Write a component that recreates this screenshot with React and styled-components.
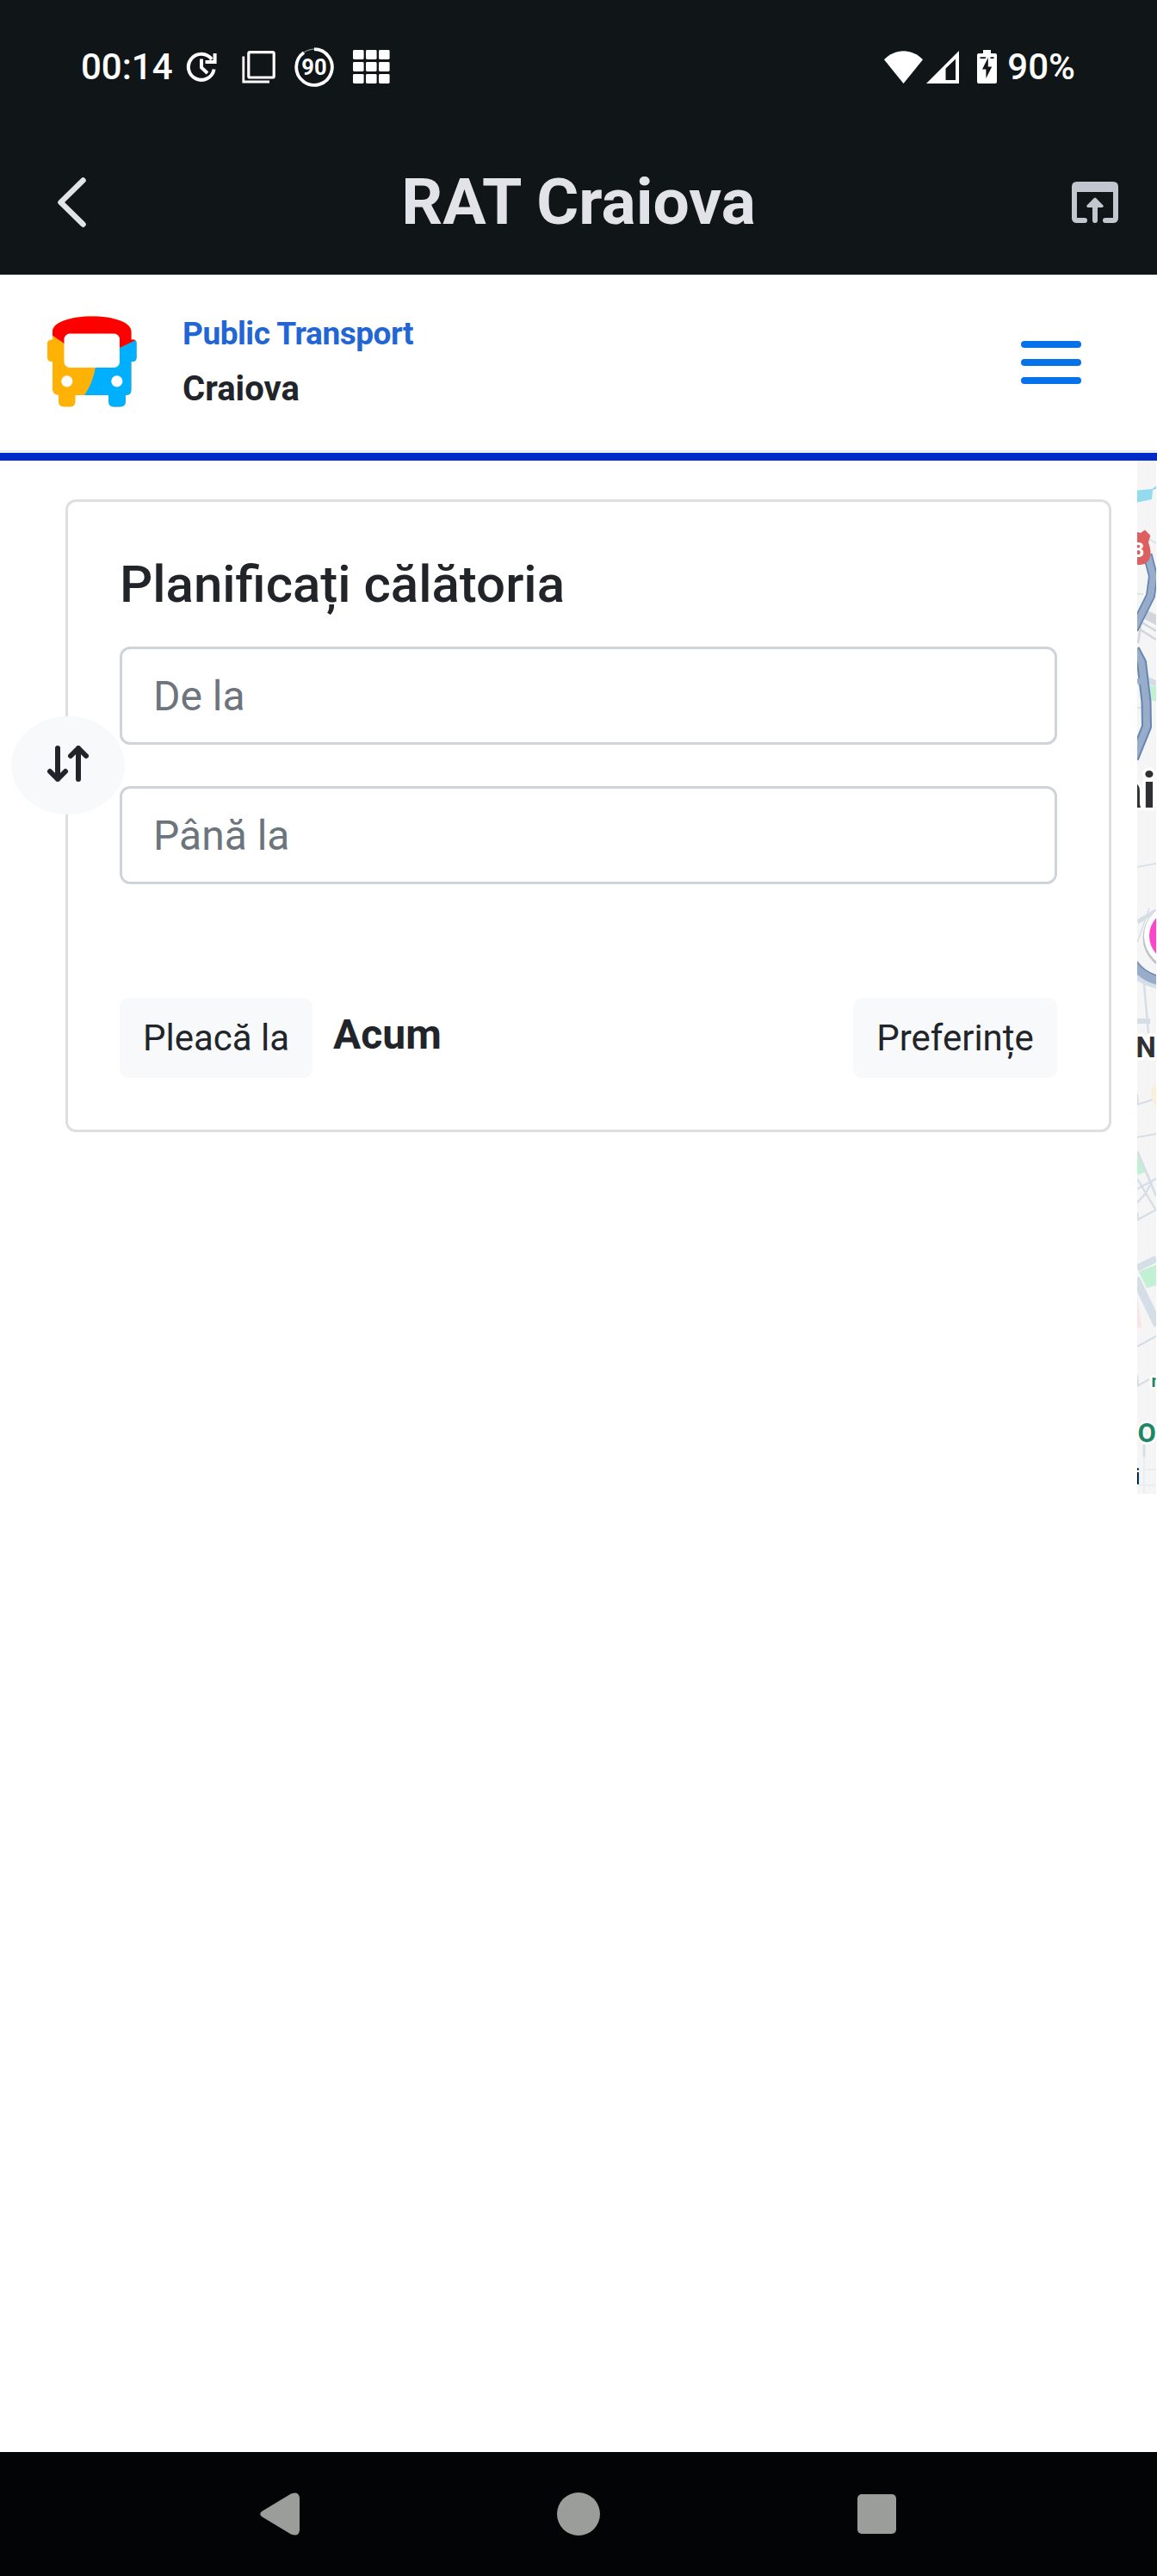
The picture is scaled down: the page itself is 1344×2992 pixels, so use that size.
import React from 'react';
import styled, { createGlobalStyle } from 'styled-components';

const GlobalStyle = createGlobalStyle`
  *, *::before, *::after { box-sizing: border-box; }
  body {
    margin: 0;
    background: #fff;
    font-family: Roboto, "Noto Sans", sans-serif;
    color: #212529;
  }
  svg { display: block; flex: none; }
`;

const Screen = styled.div`
  width: 1344px;
  height: 2992px;
  display: flex;
  flex-direction: column;
  background: #fff;
  overflow: hidden;
`;

const StatusBar = styled.div`
  height: 155px;
  padding: 0 95px 0 94px;
  display: flex;
  justify-content: space-between;
  background: #101518;
  color: #fff;
`;

const StatusGroup = styled.div`
  height: 155px;
  display: flex;
  align-items: center;
  gap: ${(p) => p.$gap}px;
`;

const StatusText = styled.span`
  font-size: 42px;
  font-weight: 500;
  line-height: 155px;
`;

const TitleBar = styled.header`
  height: 164px;
  padding: 0 36px 4px;
  display: flex;
  align-items: center;
  justify-content: space-between;
  background: #101518;
  color: #e1e3e8;
`;

const AppTitle = styled.h1`
  margin: 0;
  padding-bottom: 3px;
  font-size: 75px;
  font-weight: 700;
  line-height: 150px;
`;

const BarButton = styled.button`
  width: 72px;
  height: 72px;
  padding: 0 0 0 ${(p) => p.$inset || 0}px;
  border: 0;
  background: none;
  display: flex;
  align-items: center;
`;

const SiteHeader = styled.div`
  height: 216px;
  padding: 0 88px 5px 54px;
  display: flex;
  align-items: center;
  justify-content: space-between;
  border-bottom: 9px solid #002bcc;
  box-shadow: inset 0 -3px 0 #eef1f3;
`;

const Brand = styled.div`
  display: flex;
  align-items: center;
  gap: 52px;
`;

const BrandText = styled.div`
  display: flex;
  flex-direction: column;
`;

const BrandLine = styled.span`
  font-size: ${(p) => p.$size}px;
  font-weight: 700;
  line-height: 64px;
  letter-spacing: ${(p) => p.$tracking || 0}px;
  color: ${(p) => p.$color};
`;

const MenuButton = styled.button`
  width: 70px;
  margin-top: 2px;
  padding: 0;
  border: 0;
  background: none;
  display: flex;
  flex-direction: column;
  gap: 13.5px;
`;

const MenuLine = styled.span`
  height: 7.5px;
  border-radius: 4px;
  background: #0672ea;
`;

const Content = styled.main`
  flex: 1;
  display: flex;
  align-items: flex-start;
`;

const PlannerPane = styled.section`
  width: 1321px;
  padding: 45px 30px 0 76px;
`;

const Card = styled.div`
  position: relative;
  height: 735px;
  padding: 60px 60px 0;
  border: 3px solid #dfdfdf;
  border-radius: 12px;
  display: flex;
  flex-direction: column;
`;

const CardTitle = styled.h2`
  margin: 0 0 36px;
  font-size: 60px;
  font-weight: 500;
  line-height: 72px;
`;

const Field = styled.input`
  width: 100%;
  height: 114px;
  margin: 0 0 48px;
  padding: 0 36px;
  border: 3px solid #ced4da;
  border-radius: 12px;
  background: #fff;
  font-family: inherit;
  font-size: 48px;
  color: #212529;
  &::placeholder { color: #6c757d; opacity: 1; }
`;

const SwapButton = styled.button`
  position: absolute;
  left: -66px;
  top: 249px;
  width: 132px;
  height: 114px;
  padding: 0 0 4px;
  border: 0;
  border-radius: 50%;
  background: #f8f9fb;
  display: flex;
  align-items: center;
  justify-content: center;
`;

const OptionsRow = styled.div`
  margin-top: 84px;
  display: flex;
  align-items: flex-start;
`;

const LightButton = styled.button`
  width: ${(p) => p.$width}px;
  height: 93px;
  padding: 0;
  border: 0;
  border-radius: 10px;
  background: #f8f9fb;
  font-family: inherit;
  font-size: 42px;
  line-height: 93px;
  color: #212529;
`;

const DepartValue = styled.strong`
  flex: 1;
  margin-left: 24px;
  font-size: 48px;
  font-weight: 700;
  line-height: 86px;
`;

const NavBar = styled.nav`
  height: 144px;
  padding: 0 303px 0 302px;
  display: flex;
  align-items: center;
  justify-content: space-between;
  background: #020405;
  color: #9b9d9b;
`;

const HistoryIcon = () => (
  <svg width="36" height="36" viewBox="0 0 36 36" fill="none" stroke="#fff" strokeWidth="4">
    <path d="M30 9A15 15 0 1 0 32.6 20.5" />
    <path d="M33.6 2V12H22.5" />
    <path d="M18 8.5V18.5L25 25" />
  </svg>
);

const LayersIcon = () => (
  <svg width="39" height="38" viewBox="0 0 39 38" fill="none" stroke="#fff">
    <rect x="7.8" y="1.6" width="29.4" height="29.4" rx="1.6" strokeWidth="3.2" />
    <path d="M1.8 6.5V36H32" strokeWidth="2.8" />
  </svg>
);

const BadgeIcon = () => (
  <svg width="46" height="46" viewBox="0 0 46 46" fill="none">
    <path d="M23 2.2A20.8 20.8 0 1 1 11 6" stroke="#fff" strokeWidth="3.8" />
    <path d="M11 6A20.8 20.8 0 0 1 23 2.2" stroke="#8b8e90" strokeWidth="1.2" />
    <text x="23" y="32.300" textAnchor="middle" fontFamily="Roboto, sans-serif" fontSize="25.500" fontWeight="700" fill="#fff">90</text>
  </svg>
);

const GridIcon = () => (
  <svg width="43" height="39" viewBox="0 0 43 39" fill="#fff">
    {[0, 14, 28].map((y) =>
      [0, 15, 30].map((x) => <rect key={`${x}-${y}`} x={x} y={y} width="12.6" height="11" rx="1.4" />)
    )}
  </svg>
);

const WifiIcon = () => (
  <svg width="45" height="38" viewBox="0 0 45 38" fill="#fff">
    <path d="M0 10.2C6 4 14 0.3 22.5 0.3S39 4 45 10.2L22.5 38Z" />
  </svg>
);

const SignalIcon = () => (
  <svg width="38" height="38" viewBox="0 0 38 38" fill="#fff" fillRule="evenodd">
    <path d="M38 0V38H0ZM34 9.5 22.5 20.5V34H34Z" />
  </svg>
);

const BatteryIcon = () => (
  <svg width="23" height="39" viewBox="0 0 23 39">
    <path d="M7 0H16V4H21Q23 4 23 6V37Q23 39 21 39H2Q0 39 0 37V6Q0 4 2 4H7Z" fill="#fff" />
    <path d="M3.5 8.2H10.5L9.5 10H3.5ZM15.5 8.2H19.5V10H15.5Z" fill="#101518" />
    <path d="M12.8 9 6 22.5H10.4V33L17.2 19.5H12.8Z" fill="#101518" />
  </svg>
);

const BackIcon = () => (
  <svg width="36" height="60" viewBox="0 0 36 60" fill="none" stroke="#e1e3e8" strokeWidth="6.500" strokeLinecap="round" strokeLinejoin="round">
    <path d="M30.500 4.500 4.500 30 30.500 55.500" />
  </svg>
);

const OpenIcon = () => (
  <svg width="72" height="72" viewBox="0 0 24 24" fill="#c1c6cf">
    <path d="M5 4H19Q21 4 21 6V18Q21 20 19 20H16A1 1 0 0 1 16 18H19V8H5V18H8A1 1 0 0 1 8 20H5Q3 20 3 18V6Q3 4 5 4Z" />
    <path d="M11.65 10.35Q12 10 12.35 10.35L15.15 13.15Q15.5 13.8 14.8 14H13V19A1 1 0 0 1 11 19V14H9.2Q8.5 13.8 8.85 13.15Z" />
  </svg>
);

const BusLogo = () => (
  <svg width="106" height="108" viewBox="54 366 106 108">
    <defs>
      <clipPath id="bus">
        <path d="M61 385C61 375 80 367.5 107 367.5S152.500 375 152.500 385V394.500H155Q158.700 394.500 158.700 399V415Q158.700 420 154 420H152.500V453Q152.500 459 146 459V466Q146 472.500 139.500 472.500H132Q126 472.500 126 466V459H87.500V466Q87.500 472.500 81.500 472.500H74.500Q68 472.500 68 466V459Q61 458 61 452V420H60Q55 420 55 415V399Q55 394.500 60 394.500H61Z" />
      </clipPath>
    </defs>
    <g clipPath="url(#bus)">
      <rect x="54" y="366" width="106" height="108" fill="#ffb206" />
      <path d="M139 404 162 392V474H98V459Q108 445 111 426L120 404Z" fill="#00b0ff" />
      <path d="M54 366H160V394L139 404H82L60 389 54 385Z" fill="#ff0000" />
    </g>
    <rect x="74.500" y="387.500" width="64.500" height="39.500" rx="6.500" fill="#fff" />
    <circle cx="77.800" cy="442.800" r="6.600" fill="#fff" />
    <circle cx="135.800" cy="442.800" r="6.600" fill="#fff" />
  </svg>
);

const SwapIcon = () => (
  <svg width="48" height="42" viewBox="0 0 48 42" fill="none" stroke="#212529" strokeWidth="6" strokeLinecap="round" strokeLinejoin="round">
    <path d="M12 3V39M3 30 12 39 21 30" />
    <path d="M36 39V3M27 12 36 3 45 12" />
  </svg>
);

const MapStrip = () => (
  <svg width="22" height="1200" viewBox="0 0 22 1200" fontFamily="Roboto, sans-serif">
    <rect width="22" height="1200" fill="#f5f5f5" />
    <path d="M0 34.400 17 33 22 29.500V33L18 34 17 45 0 48.500Z" fill="#93dbee" />
    <g fill="none" stroke="#d5dee7" strokeWidth="1.500">
      <path d="M12 90 22 96M0 155H7M0 287H6" />
      <path d="M0 472 22 468" />
      <path d="M0 536 22 523" strokeWidth="5" />
      <path d="M0 560 14 520" />
      <path d="M8 608 13 665" strokeWidth="2.500" />
      <path d="M0 651H15" strokeWidth="6" />
      <path d="M0 748 22 741M0 786 22 782M0 735 1 748" strokeWidth="2" />
    </g>
    <path d="M8 172 22 179V191L8 184Z" fill="#d2d6db" />
    <path d="M2 186 22 198M0 194 22 208M5 185 1 212" fill="none" stroke="#d2d6db" strokeWidth="2.500" />
    <path d="M14 261 22 262V280L16 278Z" fill="#c2f0d4" />
    <path d="M8 253 22 259" stroke="#d3dde6" strokeWidth="7" />
    <g fill="none" strokeLinejoin="round">
      <path d="M12 109 18.500 134 15.500 157-4 196" stroke="#6785b2" strokeWidth="11" />
      <path d="M-3 219 5 234 10.500 280 11 309-4 346" stroke="#6785b2" strokeWidth="12" />
      <path d="M12 109 18.500 134 15.500 157-4 196" stroke="#98adca" strokeWidth="7.500" />
      <path d="M-3 219 5 234 10.500 280 11 309-4 346" stroke="#98adca" strokeWidth="8" />
      <path d="M0 257 11 254" stroke="#98adca" strokeWidth="7" />
    </g>
    <path d="M0 83 4 84 9 80.500 15.300 87 13 95Q16 103 15.500 110 13 121 4 121H0Z" fill="#dc6062" />
    <text x="-5.500" y="112" fontSize="24" fontWeight="700" fill="#fff">8</text>
    <text x="21.500" y="403" textAnchor="end" fontSize="58" fontWeight="700" fill="#2f3034" stroke="#fff" strokeWidth="7" paintOrder="stroke" strokeLinejoin="round">ai</text>
    <circle cx="45" cy="554" r="38.500" fill="#bcc3c9" />
    <circle cx="45" cy="552" r="37" fill="#fff" />
    <circle cx="45" cy="552" r="31" fill="#ff43cb" />
    <path d="M-4 598Q8 607 26 611" fill="none" stroke="#d3dee8" strokeWidth="6" />
    <path d="M-4 584Q6 599 26 604" fill="none" stroke="#98adca" strokeWidth="11" />
    <path d="M0 583Q8 593 22 598" fill="none" stroke="#5d75a8" strokeWidth="1" />
    <text x="-1.500" y="692.700" fontSize="33" fontWeight="700" fill="#303035" stroke="#fff" strokeWidth="7" paintOrder="stroke" strokeLinejoin="round">N</text>
    <path d="M16 731 20 723 22 725V752L18 745Z" fill="#f9efdb" />
    <path d="M0 806 10 826 0 830Z" fill="#c2f0d4" />
    <g fill="none" stroke="#d5dde6" strokeWidth="2.200">
      <path d="M0 802 22 854" strokeWidth="2.800" />
      <path d="M0 846 22 834M0 834 22 871M0 862 9 852 17 838M0 882 22 870M0 873 1 882" />
      <path d="M0 938 22 927" strokeWidth="8" />
      <path d="M0 1029 22 1017M0 1075 14 1067M0 1062 1 1074" />
      <path d="M8 1143V1157" strokeWidth="2.800" />
      <path d="M8 1157V1200M0 1190 22 1190M8 1172H22" stroke="#e9eef0" />
    </g>
    <path d="M2 942 22 934V958L11 961Z" fill="#c2f0d4" />
    <path d="M-2 950 24 1004" stroke="#d5dde6" strokeWidth="10" />
    <path d="M0 972 5 1006 0 1008Z" fill="#fbe3e3" />
    <g fill="#1f8766" stroke="#fff" strokeWidth="5" paintOrder="stroke" strokeLinejoin="round">
      <text x="16.500" y="1076" fontSize="20" fontWeight="700">m</text>
      <text x="0.500" y="1140.300" fontSize="31" fontWeight="700">O</text>
    </g>
    <text x="-2.400" y="1189" fontSize="25" fill="#000">i</text>
  </svg>
);

const NavBackIcon = () => (
  <svg width="46" height="50" viewBox="0 0 46 50" fill="currentColor">
    <path d="M2 22 36 1.500Q45 -2 46 6V44Q45 52 36 48.500L2 28Q-1.500 25 2 22Z" />
  </svg>
);

const NavHomeIcon = () => (
  <svg width="50" height="50" viewBox="0 0 50 50" fill="currentColor">
    <circle cx="25" cy="25" r="25" />
  </svg>
);

const NavRecentIcon = () => (
  <svg width="45" height="46" viewBox="0 0 45 46" fill="currentColor">
    <rect width="45" height="46" rx="5" />
  </svg>
);

export default function App() {
  return (
    <Screen>
      <GlobalStyle />
      <StatusBar>
        <StatusGroup $gap={29}>
          <StatusGroup $gap={15}>
            <StatusText>00:14</StatusText>
            <HistoryIcon />
          </StatusGroup>
          <StatusGroup $gap={22}>
            <LayersIcon />
            <BadgeIcon />
            <GridIcon />
          </StatusGroup>
        </StatusGroup>
        <StatusGroup $gap={12}>
          <StatusGroup $gap={21}>
            <StatusGroup $gap={4}>
              <WifiIcon />
              <SignalIcon />
            </StatusGroup>
            <BatteryIcon />
          </StatusGroup>
          <StatusText>90%</StatusText>
        </StatusGroup>
      </StatusBar>
      <TitleBar>
        <BarButton $inset={30} aria-label="Back"><BackIcon /></BarButton>
        <AppTitle>RAT Craiova</AppTitle>
        <BarButton aria-label="Open in browser"><OpenIcon /></BarButton>
      </TitleBar>
      <SiteHeader>
        <Brand>
          <BusLogo />
          <BrandText>
            <BrandLine $size={37} $tracking={-0.45} $color="#2166d4">Public Transport</BrandLine>
            <BrandLine $size={40} $color="#212529">Craiova</BrandLine>
          </BrandText>
        </Brand>
        <MenuButton aria-label="Menu">
          <MenuLine />
          <MenuLine />
          <MenuLine />
        </MenuButton>
      </SiteHeader>
      <Content>
        <PlannerPane>
          <Card>
            <CardTitle>Planificați călătoria</CardTitle>
            <Field placeholder="De la" />
            <Field placeholder="Până la" />
            <OptionsRow>
              <LightButton $width={224}>Pleacă la</LightButton>
              <DepartValue>Acum</DepartValue>
              <LightButton $width={237}>Preferințe</LightButton>
            </OptionsRow>
            <SwapButton aria-label="Swap"><SwapIcon /></SwapButton>
          </Card>
        </PlannerPane>
        <MapStrip />
      </Content>
      <NavBar>
        <NavBackIcon />
        <NavHomeIcon />
        <NavRecentIcon />
      </NavBar>
    </Screen>
  );
}
